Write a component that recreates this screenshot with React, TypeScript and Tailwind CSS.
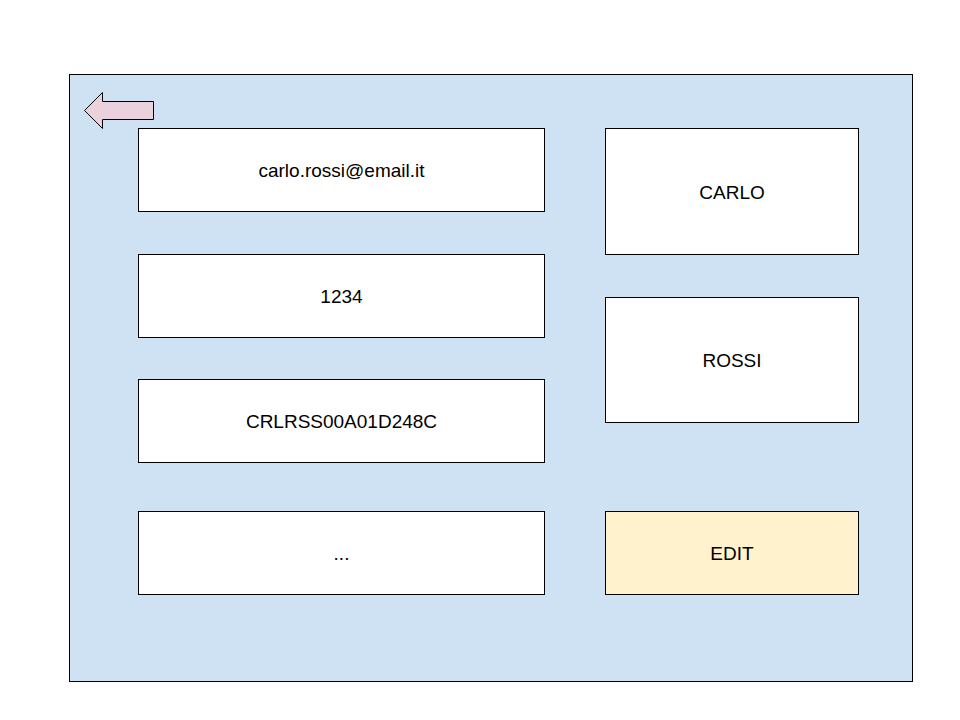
import type { ReactNode } from "react";

function Field({ className, children }: { className: string; children: ReactNode }) {
  return (
    <div className={`flex items-center justify-center border border-black bg-white pt-0.5 ${className}`}>
      {children}
    </div>
  );
}

function BackArrow() {
  return (
    <svg width="70" height="37" viewBox="0 0 70 37" className="block" aria-hidden="true">
      <path
        d="M0.5 18.5 L18.5 0.5 V9.5 H69.5 V27.5 H18.5 V36.5 Z"
        fill="#ead1dc"
        stroke="#000000"
        strokeWidth="1"
      />
    </svg>
  );
}

export default function App() {
  return (
    <div className="min-h-screen bg-white pt-[74px] pr-[47px] pb-[38px] pl-[69px] font-['Liberation_Sans',Arial,sans-serif] text-[19px] leading-6 text-black">
      <main className="border border-black bg-[#cfe2f3] pt-[17px] pb-[86px]">
        <header className="h-9 pl-[14px]">
          <button type="button" aria-label="Back" className="block cursor-pointer">
            <BackArrow />
          </button>
        </header>

        <div className="flex flex-col gap-12 pr-[53px] pl-[68px]">
          <section className="grid grid-cols-[407fr_254fr] gap-x-[60px]">
            <div className="flex h-[335px] flex-col justify-between">
              <Field className="h-[84px]">carlo.rossi@email.it</Field>
              <Field className="h-[84px]">1234</Field>
              <Field className="h-[84px]">CRLRSS00A01D248C</Field>
            </div>
            <div className="flex flex-col gap-[42px]">
              <Field className="h-[127px]">CARLO</Field>
              <Field className="h-[126px]">ROSSI</Field>
            </div>
          </section>

          <section className="grid grid-cols-[407fr_254fr] gap-x-[60px]">
            <Field className="h-[84px]">...</Field>
            <button
              type="button"
              className="flex h-[84px] cursor-pointer items-center justify-center border border-black bg-[#fff2cc] pt-0.5"
            >
              EDIT
            </button>
          </section>
        </div>
      </main>
    </div>
  );
}
